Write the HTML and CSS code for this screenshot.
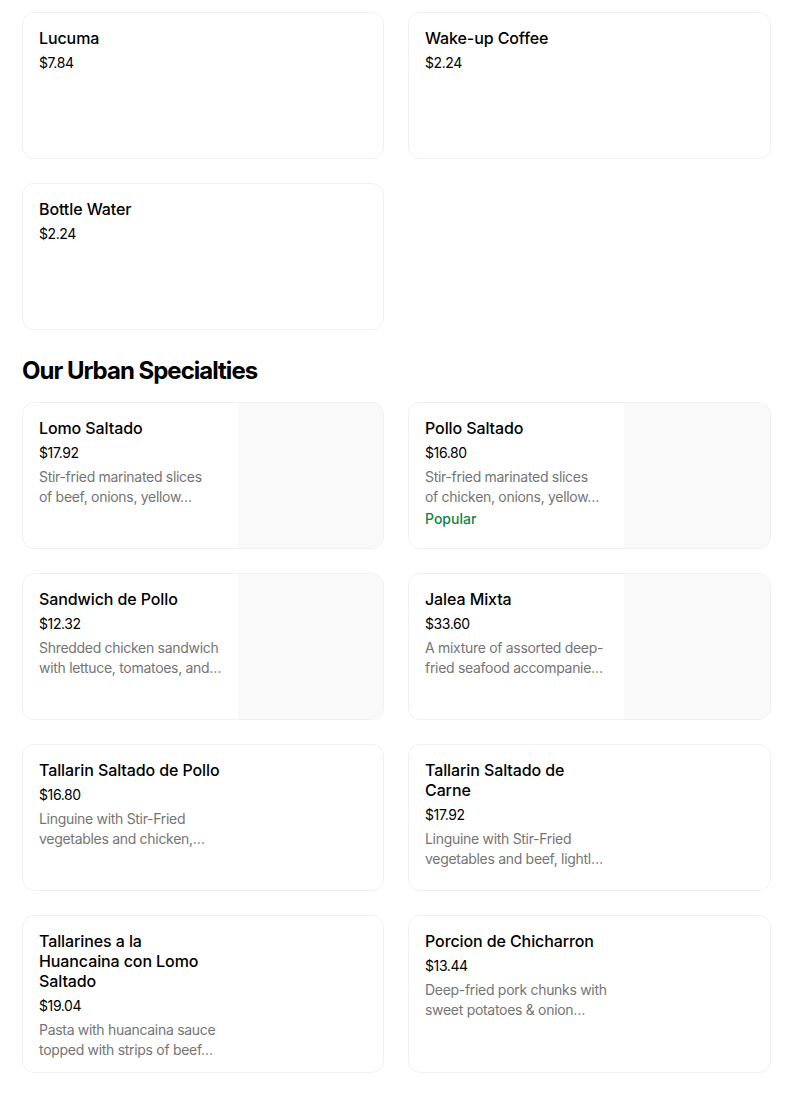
FILE: index.html
```html
<!DOCTYPE html>
<html>
<head>
<meta charset="utf-8">
<link rel="stylesheet" href="styles.css">
</head>
<body>
<div class="page">
  <section class="grid">
    <div class="card"><div class="info"><div class="title">Lucuma</div><div class="price">$7.84</div></div></div>
    <div class="card"><div class="info"><div class="title">Wake-up Coffee</div><div class="price">$2.24</div></div></div>
    <div class="card"><div class="info"><div class="title">Bottle Water</div><div class="price">$2.24</div></div></div>
  </section>
  <h2 class="heading">Our Urban Specialties</h2>
  <section class="grid">
    <div class="card"><div class="info"><div class="title">Lomo Saltado</div><div class="price">$17.92</div><div class="desc">Stir-fried marinated slices<br>of beef, onions, yellow…</div></div><div class="thumb"></div></div>
    <div class="card"><div class="info"><div class="title">Pollo Saltado</div><div class="price">$16.80</div><div class="desc">Stir-fried marinated slices<br>of chicken, onions, yellow…</div><div class="tag">Popular</div></div><div class="thumb"></div></div>
    <div class="card"><div class="info"><div class="title">Sandwich de Pollo</div><div class="price">$12.32</div><div class="desc">Shredded chicken sandwich<br>with lettuce, tomatoes, and…</div></div><div class="thumb"></div></div>
    <div class="card"><div class="info"><div class="title">Jalea Mixta</div><div class="price">$33.60</div><div class="desc">A mixture of assorted deep-<br>fried seafood accompanie…</div></div><div class="thumb"></div></div>
    <div class="card"><div class="info"><div class="title">Tallarin Saltado de Pollo</div><div class="price">$16.80</div><div class="desc">Linguine with Stir-Fried<br>vegetables and chicken,…</div></div></div>
    <div class="card"><div class="info"><div class="title">Tallarin Saltado de Carne</div><div class="price">$17.92</div><div class="desc">Linguine with Stir-Fried<br>vegetables and beef, lightl…</div></div></div>
    <div class="card"><div class="info"><div class="title">Tallarines a la Huancaina con Lomo Saltado</div><div class="price">$19.04</div><div class="desc">Pasta with huancaina sauce<br>topped with strips of beef…</div></div></div>
    <div class="card"><div class="info"><div class="title">Porcion de Chicharron</div><div class="price">$13.44</div><div class="desc">Deep-fried pork chunks with<br>sweet potatoes &amp; onion…</div></div></div>
  </section>
</div>
</body>
</html>
```
FILE: styles.css
```css
* { box-sizing: border-box; }
html, body { margin: 0; padding: 0; background: #fff; }
body { font-family: Inter, "Noto Sans", sans-serif; color: #000; }
.page { padding: 12px 33px 0 22px; }
.grid {
  display: grid;
  grid-template-columns: 362px 363px;
  column-gap: 24px;
  row-gap: 24px;
}
.card {
  display: flex;
  justify-content: space-between;
  min-height: 147px;
  border: 1px solid #f1f1f1;
  border-radius: 12px;
  overflow: hidden;
  background: #fff;
}
.info {
  flex: none;
  width: 215px;
  padding: 15px 16px 12px 16px;
  overflow: hidden;
}
.title {
  font-size: 16px;
  font-weight: 500;
  line-height: 20px;
  letter-spacing: -0.1px;
}
.price {
  font-size: 14px;
  line-height: 20px;
  margin-top: 5px;
  letter-spacing: -0.4px;
}
.desc {
  font-size: 14px;
  line-height: 20px;
  color: #757575;
  margin-top: 4px;
  letter-spacing: -0.3px;
  white-space: nowrap;
}
.tag {
  font-size: 14px;
  font-weight: 500;
  line-height: 20px;
  margin-top: 2px;
  color: #0e8345;
}
.thumb {
  width: 146px;
  flex: none;
  background: #f9f9f9;
}
.heading {
  margin: 25px 0 15px 0;
  font-size: 24px;
  line-height: 32px;
  font-weight: 700;
  letter-spacing: -1px;
}
```
